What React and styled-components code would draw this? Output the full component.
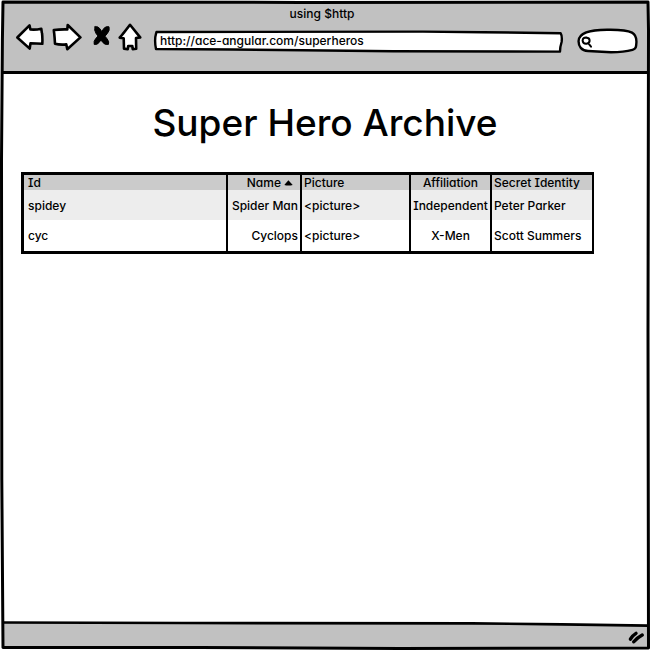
import React from "react";
import styled, { createGlobalStyle } from "styled-components";

const INK = "#000000";
const CHROME = "#c1c1c1";

const GlobalStyle = createGlobalStyle`
  * { box-sizing: border-box; }
  body {
    margin: 0;
    background: #ffffff;
    color: ${INK};
    font-family: Inter, "Open Sans", sans-serif;
    font-size: 12px;
    font-weight: 500;
    line-height: 18px;
    font-feature-settings: "cv11" 1, "cv08" 1;
  }
`;

const BrowserWindow = styled.div`
  position: relative;
  display: flex;
  flex-direction: column;
  min-height: 100vh;
  padding: 2px;
`;

/* Hand-drawn line work stretched over the box that holds it */
const Sketch = styled.svg`
  position: absolute;
  inset: 0;
  width: 100%;
  height: 100%;
  pointer-events: none;
  fill: ${(p) => p.$fill || "none"};
  stroke: ${INK};
  stroke-width: ${(p) => p.$weight || 2.4}px;
  stroke-linejoin: round;
  stroke-linecap: round;

  path { vector-effect: non-scaling-stroke; }
`;

const Header = styled.header`
  padding: 2px 10px 17px 12px;
  background: ${CHROME};
  border-bottom: 3px solid ${INK};
`;

const WindowTitle = styled.div`
  height: 18px;
  padding-right: 8px;
  line-height: 20px;
  text-align: center;
`;

const Toolbar = styled.nav`
  display: flex;
  align-items: flex-start;
  gap: 4px;
`;

const ToolButton = styled.button`
  flex: none;
  display: block;
  padding: 0;
  border: 0;
  background: none;
  cursor: pointer;

  svg {
    display: block;
    fill: ${(p) => (p.$solid ? INK : "#ffffff")};
    stroke: ${INK};
    stroke-width: ${(p) => (p.$solid ? 1 : 2.6)}px;
    stroke-linejoin: round;
    stroke-linecap: round;
  }
`;

const Field = styled.label`
  position: relative;
  display: block;
  flex: ${(p) => (p.$wide ? "1 1 0" : "0 0 62px")};
  min-width: 0;
  height: ${(p) => (p.$wide ? 24 : 26)}px;
  margin-top: ${(p) => (p.$wide ? 8 : 6)}px;
  margin-left: ${(p) => (p.$wide ? 5 : 8)}px;
`;

const FieldInput = styled.input`
  position: relative;
  display: block;
  width: 100%;
  height: 20px;
  padding: 0 8px 0 ${(p) => (p.$icon ? 18 : 7)}px;
  border: 0;
  outline: 0;
  background: transparent;
  color: inherit;
  font: inherit;
  font-feature-settings: inherit;
`;

const SearchIcon = styled.svg`
  position: absolute;
  left: 5px;
  top: 7px;
  fill: none;
  stroke: ${INK};
  stroke-width: 2px;
  stroke-linecap: round;
`;

const Content = styled.main`
  flex: 1;
  padding: 25px 54px 24px 19px;
`;

const Heading = styled.h1`
  margin: 0 -35px 25px 0;
  font-size: 37px;
  line-height: 48px;
  font-weight: 500;
  text-align: center;
`;

const HeroTable = styled.table`
  width: 100%;
  table-layout: fixed;
  border-collapse: separate;
  border-spacing: 0;
  border: 3px solid ${INK};
  border-right-width: 2px;
`;

const Column = styled.col`
  width: ${(p) => p.$width};
`;

const Cell = styled.td`
  height: ${(p) => (p.$head ? 15 : 30)}px;
  padding: 0 2px;
  line-height: 15px;
  font-weight: 500;
  text-align: ${(p) => p.$align || "left"};
  white-space: nowrap;
  border-left: 2px solid ${INK};

  &:first-child {
    padding-left: 4px;
    border-left: 0;
  }
`;

const HeadRow = styled.tr`
  background: #cbcbcb;
`;

const Row = styled.tr`
  background: ${(p) => (p.$shaded ? "#ededed" : "#ffffff")};

  &:last-child td {
    padding-bottom: 1px;
    height: 31px;
  }
`;

const SortButton = styled.button`
  display: inline-flex;
  align-items: center;
  gap: 3px;
  padding: 0 5px 0 0;
  border: 0;
  background: none;
  color: inherit;
  font: inherit;
  font-feature-settings: inherit;
`;

const StatusBar = styled.footer`
  position: relative;
  display: flex;
  align-items: flex-end;
  justify-content: flex-end;
  height: 25px;
  padding: 0 3px 4px 0;
  background: ${CHROME};
`;

const FooterEdge = styled.svg`
  position: absolute;
  left: 0;
  top: -2px;
  width: 100%;
  height: 8px;
  path { vector-effect: non-scaling-stroke; }
`;

const ResizeGrip = styled.svg`
  display: block;
  fill: none;
  stroke: ${INK};
  stroke-width: 3.4px;
  stroke-linecap: round;
`;

const columns = [
  { key: "id", label: "Id", width: "auto" },
  { key: "name", label: "Name", width: "74px", align: "right", sorted: true },
  { key: "picture", label: "Picture", width: "109px" },
  { key: "affiliation", label: "Affiliation", width: "81px", align: "center" },
  { key: "identity", label: "Secret Identity", width: "102px" },
];

const heroes = [
  { id: "spidey", name: "Spider Man", picture: "<picture>", affiliation: "Independent", identity: "Peter Parker" },
  { id: "cyc", name: "Cyclops", picture: "<picture>", affiliation: "X-Men", identity: "Scott Summers" },
];

const tools = [
  {
    label: "Back",
    width: 32,
    art: <path d="M3.3 15.5 L15.5 3.3 L16.4 7.5 Q22 8 27.3 6.7 Q28.8 14 28.3 21.8 L16.5 21.2 L15.7 26.6 Z" />,
  },
  {
    label: "Forward",
    width: 34,
    art: <path d="M3.8 8 Q10 7.2 17.3 7.4 L17.7 3 L30.4 15.4 L17.3 27.2 L16.3 22.4 Q10 23 5 21.8 Q4.6 14 3.8 8 Z" />,
  },
  {
    label: "Stop",
    width: 24,
    solid: true,
    art: (
      <path d="M7 4.8 Q9.8 4 11.8 6.6 L13.8 9.6 L15.8 6.4 Q18 4 21 4.8 Q22 8.5 19.4 11.4 L17 14.2 L19.2 17 Q21.6 20 20.4 22.4 Q17 23.2 14.8 20.4 L12.9 18 L11.2 20.4 Q8.8 23.2 6.2 22.4 Q5.4 19.2 7.6 16.8 L10 14 L8 11.4 Q5.8 8.2 7 4.8 Z" />
    ),
  },
  {
    label: "Home",
    width: 28,
    art: <path d="M14 2.8 L24.2 15.4 L20 16 L20.2 26.8 L16.7 27.2 L16.3 24 L12.2 24 L11.7 27.2 L8 26.6 L7.7 16.2 L3.7 15.7 Q9 9.5 14 2.8 Z" />,
  },
];

export default function App() {
  return (
    <>
      <GlobalStyle />
      <BrowserWindow>
        <Header>
          <WindowTitle>using $http</WindowTitle>
          <Toolbar aria-label="Browser">
            {tools.map((tool) => (
              <ToolButton key={tool.label} type="button" aria-label={tool.label} $solid={tool.solid}>
                <svg width={tool.width} height="32" viewBox={`0 0 ${tool.width} 32`}>
                  {tool.art}
                </svg>
              </ToolButton>
            ))}
            <Field $wide>
              <Sketch $fill="#ffffff" viewBox="0 0 411 24" preserveAspectRatio="none" aria-hidden="true">
                <path d="M3.5 2 Q1 9 3 19 L80 19.5 L150 20.3 L240 21.2 L407 21.6 Q407 17 408.6 12 Q409.4 6 407.6 3.2 L330 2.2 L270 1.6 Z" />
              </Sketch>
              <FieldInput aria-label="Address" type="text" defaultValue="http://ace-angular.com/superheros" />
            </Field>
            <Field>
              <Sketch $fill="#ffffff" viewBox="0 0 62 26" preserveAspectRatio="none" aria-hidden="true">
                <path d="M2.6 13 C3 4 16 1.8 31 1.8 C42 1.6 52 2.6 56 4.6 C60 7 60.6 11 60.4 14.5 C60.2 19 60 20.8 56.5 21.8 C50 23.6 43 24.2 35 24.2 L12 23 C5.5 22.6 2.4 18.5 2.6 13 Z" />
              </Sketch>
              <SearchIcon width="13" height="14" viewBox="0 0 13 14" aria-hidden="true">
                <path d="M5.6 2.6 Q1.8 2.2 1.6 5.6 Q2 9 5.4 8.8 Q8.8 8.2 8.6 5.2 Q8.2 2.4 4.6 2.8 M7.4 8.4 L10 11.6" />
              </SearchIcon>
              <FieldInput $icon aria-label="Search" type="text" />
            </Field>
          </Toolbar>
        </Header>

        <Content>
          <Heading>Super Hero Archive</Heading>
          <HeroTable>
            <colgroup>
              {columns.map((c) => (
                <Column key={c.key} $width={c.width} />
              ))}
            </colgroup>
            <thead>
              <HeadRow>
                {columns.map((c) => (
                  <Cell as="th" scope="col" key={c.key} $head $align={c.align}>
                    {c.sorted ? (
                      <SortButton type="button">
                        {c.label}
                        <svg width="9" height="6" viewBox="0 0 9 6" aria-hidden="true">
                          <path d="M0.3 5 L4.4 0.3 L8.7 5 Q4.5 6 0.3 5 Z" />
                        </svg>
                      </SortButton>
                    ) : (
                      c.label
                    )}
                  </Cell>
                ))}
              </HeadRow>
            </thead>
            <tbody>
              {heroes.map((hero, i) => (
                <Row key={hero.id} $shaded={i % 2 === 0}>
                  {columns.map((c) => (
                    <Cell key={c.key} $align={c.align}>
                      {hero[c.key]}
                    </Cell>
                  ))}
                </Row>
              ))}
            </tbody>
          </HeroTable>
        </Content>

        <StatusBar>
          <FooterEdge viewBox="0 0 646 8" preserveAspectRatio="none" aria-hidden="true">
            <path fill="#ffffff" d="M0 0 L646 0 L646 4.8 L470 3 L180 1.5 L0 1.5 Z" />
            <path fill="none" stroke={INK} strokeWidth="2.6" d="M0 1.5 L180 2 L470 2.4 L560 3.4 L646 4.6" />
          </FooterEdge>
          <ResizeGrip width="17" height="13" viewBox="0 0 17 13" aria-hidden="true">
            <path d="M2.4 8.2 Q4.4 4.6 8 2.4" />
            <path d="M5.8 10.8 Q9 6.8 14.2 4" />
          </ResizeGrip>
        </StatusBar>

        <Sketch $weight={3} viewBox="0 0 650 650" preserveAspectRatio="none" aria-hidden="true">
          <path d="M3 2 L300 2.4 L648 2 L648.5 30 L648 330 L648.5 648 L400 648.4 L200 647.6 L3 647.6 L1.8 480 L1.5 160 L2.4 40 Z" />
        </Sketch>
      </BrowserWindow>
    </>
  );
}
